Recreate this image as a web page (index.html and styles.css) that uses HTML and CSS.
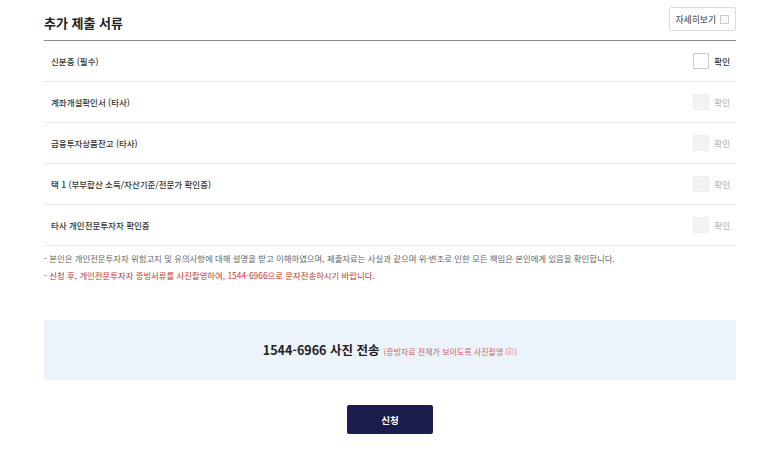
FILE: index.html
```html
<!DOCTYPE html>
<html lang="ko">
<head>
  <meta charset="UTF-8" />
  <title>추가 제출 서류</title>
  <link rel="stylesheet" href="styles.css">
</head>
<body>
  <div class="wrap">
    <div class="head">
      <h2>추가 제출 서류</h2>
      <label class="more">자세히보기 <span class="mini-box"></span></label>
    </div>

    <ul class="docs">
      <li class="doc">
        <span class="doc-name">신분증 (필수)</span>
        <label class="check"><span class="box"></span>확인</label>
      </li>
      <li class="doc">
        <span class="doc-name">계좌개설확인서 (타사)</span>
        <label class="check off"><span class="box"></span>확인</label>
      </li>
      <li class="doc">
        <span class="doc-name">금융투자상품잔고 (타사)</span>
        <label class="check off"><span class="box"></span>확인</label>
      </li>
      <li class="doc">
        <span class="doc-name">택 1 (부부합산 소득/자산기준/전문가 확인증)</span>
        <label class="check off"><span class="box"></span>확인</label>
      </li>
      <li class="doc">
        <span class="doc-name">타사 개인전문투자자 확인증</span>
        <label class="check off"><span class="box"></span>확인</label>
      </li>
    </ul>

    <div class="notes">
      <p>- 본인은 개인전문투자자 위험고지 및 유의사항에 대해 설명을 받고 이해하였으며, 제출자료는 사실과 같으며 위·변조로 인한 모든 책임은 본인에게 있음을 확인합니다.</p>
      <p class="red">- 신청 후, 개인전문투자자 증빙서류를 사진촬영하여, 1544-6966으로 문자전송하시기 바랍니다.</p>
    </div>

    <div class="send">
      <strong>1544-6966 사진 전송</strong>
      <span class="hint">(증빙자료 전체가 보이도록 사진촬영
        <svg width="9" height="8" viewBox="0 0 9 8"><path d="M1 2.2h1.6l.8-1.2h2.2l.8 1.2H8v5H1z" fill="none" stroke="#e59a9a" stroke-width=".8"/><circle cx="4.5" cy="4.6" r="1.4" fill="none" stroke="#e59a9a" stroke-width=".8"/></svg>)</span>
    </div>

    <div class="actions">
      <button class="btn">신청</button>
    </div>
  </div>
</body>
</html>
```

FILE: styles.css
```css
* { margin: 0; padding: 0; box-sizing: border-box; }
body {
  background: #fff;
  font-family: "Noto Sans CJK KR", "Noto Sans", sans-serif;
  color: #333;
}

.wrap {
  width: 692px;
  margin-left: 44px;
}

.head {
  display: flex;
  justify-content: space-between;
  align-items: flex-end;
  height: 41px;
  padding-bottom: 8px;
  border-bottom: 1px solid #8a8a8a;
}

.head h2 {
  font-size: 13px;
  font-weight: 700;
  color: #222;
  line-height: 18px;
}

.more {
  display: flex;
  align-items: center;
  gap: 4px;
  height: 24px;
  padding: 0 6px 0 6px;
  border: 1px solid #ddd;
  border-radius: 2px;
  font-size: 8.8px;
  color: #333;
  margin-bottom: 1px;
}

.mini-box {
  width: 9px;
  height: 9px;
  border: 1px solid #ccc;
  background: #fafafa;
}

.docs { list-style: none; }

.doc {
  display: flex;
  justify-content: space-between;
  align-items: center;
  height: 41px;
  padding: 0 6px 0 7px;
  border-bottom: 1px solid #ececec;
}

.doc-name {
  font-size: 8.5px;
  font-weight: 500;
  color: #333;
}

.check {
  display: flex;
  align-items: center;
  gap: 5px;
  font-size: 8.5px;
  font-weight: 500;
  color: #333;
}

.box {
  width: 16px;
  height: 16px;
  border: 1px solid #ccc;
  background: #fff;
}

.check.off { color: #bbb; }
.check.off .box {
  border-color: #efefef;
  background: #f3f3f3;
}

.notes {
  padding-top: 4px;
  font-size: 8.4px;
  line-height: 17px;
  color: #666;
}

.notes .red { color: #c8372d; }

.send {
  display: flex;
  justify-content: center;
  align-items: baseline;
  gap: 4px;
  height: 60px;
  margin-top: 36px;
  padding-top: 20px;
  background: #edf3fa;
}

.send strong {
  font-size: 12.5px;
  font-weight: 700;
  color: #222;
}

.hint {
  font-size: 8px;
  color: #d06060;
}

.actions {
  display: flex;
  justify-content: center;
  padding-top: 25px;
}

.btn {
  width: 86px;
  height: 29px;
  border: none;
  border-radius: 2px;
  background: #1c1c4d;
  color: #fff;
  font-family: inherit;
  font-size: 9.5px;
  font-weight: 700;
}
```
